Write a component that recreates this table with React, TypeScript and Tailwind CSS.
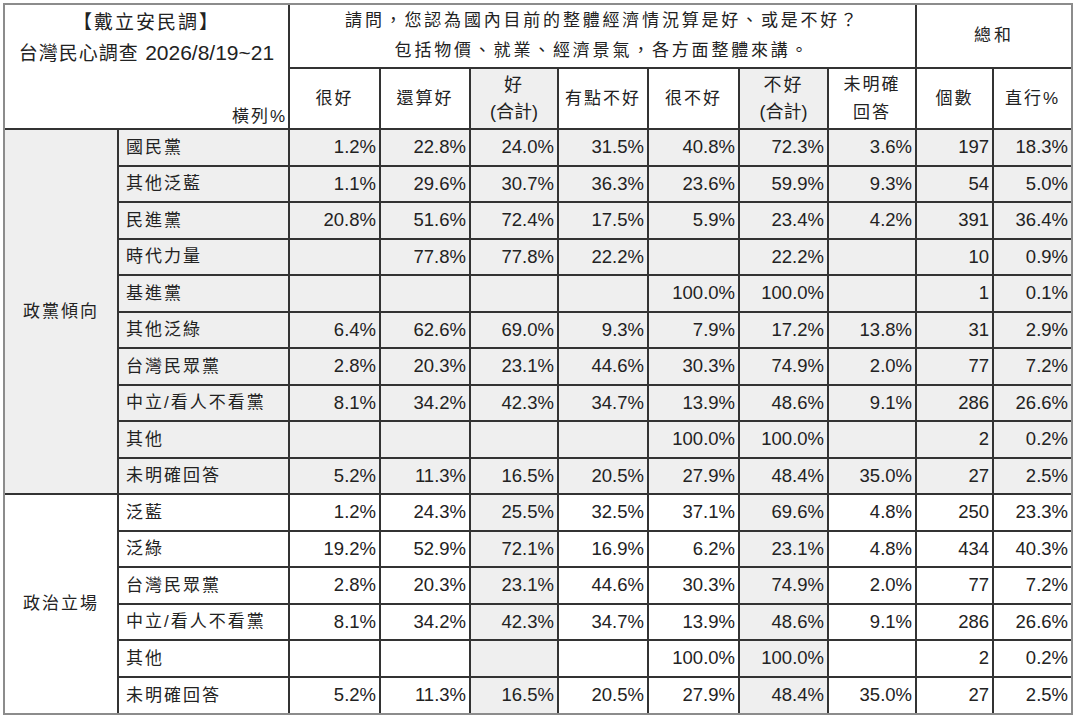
const FONT = "font-['Liberation_Sans','Noto_Sans_CJK_TC',sans-serif]";

// 每列: [標籤, 很好, 還算好, 好(合計), 有點不好, 很不好, 不好(合計), 未明確回答, 個數, 直行%]
type Row = [string, string, string, string, string, string, string, string, string, string];

const partyRows: Row[] = [
  ["國民黨", "1.2%", "22.8%", "24.0%", "31.5%", "40.8%", "72.3%", "3.6%", "197", "18.3%"],
  ["其他泛藍", "1.1%", "29.6%", "30.7%", "36.3%", "23.6%", "59.9%", "9.3%", "54", "5.0%"],
  ["民進黨", "20.8%", "51.6%", "72.4%", "17.5%", "5.9%", "23.4%", "4.2%", "391", "36.4%"],
  ["時代力量", "", "77.8%", "77.8%", "22.2%", "", "22.2%", "", "10", "0.9%"],
  ["基進黨", "", "", "", "", "100.0%", "100.0%", "", "1", "0.1%"],
  ["其他泛綠", "6.4%", "62.6%", "69.0%", "9.3%", "7.9%", "17.2%", "13.8%", "31", "2.9%"],
  ["台灣民眾黨", "2.8%", "20.3%", "23.1%", "44.6%", "30.3%", "74.9%", "2.0%", "77", "7.2%"],
  ["中立/看人不看黨", "8.1%", "34.2%", "42.3%", "34.7%", "13.9%", "48.6%", "9.1%", "286", "26.6%"],
  ["其他", "", "", "", "", "100.0%", "100.0%", "", "2", "0.2%"],
  ["未明確回答", "5.2%", "11.3%", "16.5%", "20.5%", "27.9%", "48.4%", "35.0%", "27", "2.5%"],
];

const stanceRows: Row[] = [
  ["泛藍", "1.2%", "24.3%", "25.5%", "32.5%", "37.1%", "69.6%", "4.8%", "250", "23.3%"],
  ["泛綠", "19.2%", "52.9%", "72.1%", "16.9%", "6.2%", "23.1%", "4.8%", "434", "40.3%"],
  ["台灣民眾黨", "2.8%", "20.3%", "23.1%", "44.6%", "30.3%", "74.9%", "2.0%", "77", "7.2%"],
  ["中立/看人不看黨", "8.1%", "34.2%", "42.3%", "34.7%", "13.9%", "48.6%", "9.1%", "286", "26.6%"],
  ["其他", "", "", "", "", "100.0%", "100.0%", "", "2", "0.2%"],
  ["未明確回答", "5.2%", "11.3%", "16.5%", "20.5%", "27.9%", "48.4%", "35.0%", "27", "2.5%"],
];

const colWidths = [113, 171, 91, 90, 88, 90, 91, 89, 88, 77, 78];

// 合計欄 (index 2, 5 of the numeric cells) 以灰底標示
const totalCols = [2, 5];

const cell = "border-2 border-[#333]";
const shade = "bg-[#efefef]";

function Section({
  title,
  rows,
  shaded,
}: {
  title: string;
  rows: Row[];
  shaded: boolean;
}) {
  return (
    <>
      {rows.map((row, i) => (
        <tr key={row[0] + i} className={`h-[36.5px] ${shaded ? shade : ""}`}>
          {i === 0 && (
            <td
              rowSpan={rows.length}
              className={`${cell} text-center align-middle text-[17px] tracking-[2px]`}
            >
              {title}
            </td>
          )}
          <td className={`${cell} pl-[7px] text-left align-middle text-[17px] tracking-[2px] whitespace-nowrap`}>
            {row[0]}
          </td>
          {row.slice(1).map((v, j) => (
            <td
              key={j}
              className={`${cell} pr-[3px] text-right align-middle text-[18.5px] leading-none ${
                !shaded && totalCols.includes(j) ? shade : ""
              }`}
            >
              {v}
            </td>
          ))}
        </tr>
      ))}
    </>
  );
}

function HeadCell({
  children,
  shaded = false,
}: {
  children: React.ReactNode;
  shaded?: boolean;
}) {
  return (
    <th
      className={`${cell} text-center align-middle text-[17px] font-normal leading-[28px] tracking-[2px] ${
        shaded ? shade : ""
      }`}
    >
      {children}
    </th>
  );
}

export default function App() {
  return (
    <div className={`min-h-[716px] w-[1076px] bg-white pt-[3px] pl-[3px] text-[#222] ${FONT}`}>
      <div className="w-[1070px] border-2 border-[#8c8c8c]">
        <table className="w-full table-fixed border-collapse border-hidden">
          <colgroup>
            {colWidths.map((w, i) => (
              <col key={i} style={{ width: w }} />
            ))}
          </colgroup>
          <thead>
            <tr className="h-[63px]">
              <th rowSpan={2} colSpan={2} className={`${cell} p-0 align-top font-normal`}>
                <div className="flex h-[121px] flex-col">
                  <div className="pt-[3px] text-center text-[19px] leading-[30px] tracking-[2px]">
                    【戴立安民調】
                  </div>
                  <div className="text-center text-[19px] leading-[30px] tracking-[1px]">
                    台灣民心調查 <span className="text-[21px] tracking-normal">2026/8/19~21</span>
                  </div>
                  <div className="mt-auto self-end pr-[1px] text-[17px] leading-[18px] tracking-[2px]">
                    橫列%
                  </div>
                </div>
              </th>
              <th
                colSpan={7}
                className={`${cell} text-center align-middle text-[17px] font-normal leading-[30px] tracking-[2.8px]`}
              >
                <div>請問，您認為國內目前的整體經濟情況算是好、或是不好？</div>
                <div>包括物價、就業、經濟景氣，各方面整體來講。</div>
              </th>
              <th
                colSpan={2}
                className={`${cell} text-center align-middle text-[17px] font-normal tracking-[3px]`}
              >
                總和
              </th>
            </tr>
            <tr className="h-[61px]">
              <HeadCell>很好</HeadCell>
              <HeadCell>還算好</HeadCell>
              <HeadCell shaded>
                <div className="text-[18px] leading-[27px]">好</div>
                <div className="text-[18px] leading-[27px] tracking-normal">(合計)</div>
              </HeadCell>
              <HeadCell>有點不好</HeadCell>
              <HeadCell>很不好</HeadCell>
              <HeadCell shaded>
                <div className="text-[18px] leading-[27px]">不好</div>
                <div className="text-[18px] leading-[27px] tracking-normal">(合計)</div>
              </HeadCell>
              <HeadCell>
                <div>未明確</div>
                <div>回答</div>
              </HeadCell>
              <HeadCell>個數</HeadCell>
              <HeadCell>直行%</HeadCell>
            </tr>
          </thead>
          <tbody>
            <Section title="政黨傾向" rows={partyRows} shaded />
            <Section title="政治立場" rows={stanceRows} shaded={false} />
          </tbody>
        </table>
      </div>
    </div>
  );
}
